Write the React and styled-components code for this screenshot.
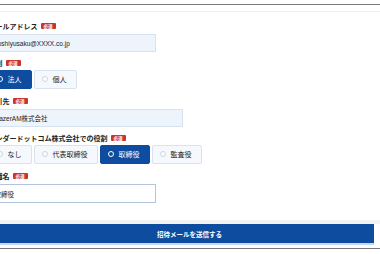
import React from "react";
import styled, { createGlobalStyle } from "styled-components";

const GlobalStyle = createGlobalStyle`
  html, body {
    margin: 0;
    padding: 0;
    background: #fff;
  }
  body {
    font-family: "Noto Sans CJK JP", "Noto Sans", sans-serif;
    overflow: hidden;
  }
`;

const Page = styled.div`
  width: 380px;
  height: 254px;
  overflow: hidden;
  background: #fff;
`;

const Frame = styled.div`
  height: 4px;
  border-bottom: 1px solid #7a7a7a;
`;

const Divider = styled.div`
  height: 6px;
  border-bottom: 1px solid #efefef;
`;

// the form is wider than the window, its left edge is cut off
const Form = styled.div`
  margin-left: -11.5px;
  padding-top: 9px;
  display: flex;
  flex-direction: column;
  gap: 6px;
`;

const Field = styled.div`
  display: flex;
  flex-direction: column;
  gap: ${(p) => (p.$choice ? 1.5 : 3)}px;
  padding-bottom: ${(p) => (p.$choice ? 1.5 : 0)}px;
`;

const Label = styled.div`
  display: flex;
  align-items: center;
  gap: 3px;
  height: 10px;
  font-size: 7px;
  font-weight: 700;
  color: #222;
  white-space: nowrap;
`;

const Badge = styled.span`
  display: inline-flex;
  align-items: center;
  height: 6px;
  padding: 0 3px;
  border-radius: 1px;
  background: #c9342b;
  color: #fff;
  font-size: 4.5px;
  font-weight: 700;
`;

const TextInput = styled.div`
  box-sizing: border-box;
  width: ${(p) => p.$width}px;
  height: ${(p) => (p.$active ? 19 : 18)}px;
  display: flex;
  align-items: center;
  padding: 0 5px;
  border: 1px solid ${(p) => (p.$active ? "#b3c5dc" : "#d6e2ef")};
  background: ${(p) => (p.$active ? "#fff" : "#eef4fb")};
  color: #222;
  font-family: "Liberation Sans", "Noto Sans CJK JP", sans-serif;
  font-size: 6.5px;
  white-space: nowrap;
`;

const RadioGroup = styled.div`
  display: flex;
  gap: 2px;
`;

const RadioOption = styled.div`
  box-sizing: border-box;
  height: 19px;
  display: flex;
  align-items: center;
  gap: 5px;
  padding: 0 9px 0 7px;
  border: 1px solid ${(p) => (p.$checked ? "#0d4c9e" : "#d9e3ef")};
  border-radius: 2px;
  background: ${(p) => (p.$checked ? "#0d4c9e" : "#f5f8fc")};
  color: ${(p) => (p.$checked ? "#fff" : "#222")};
  font-size: 7px;
  white-space: nowrap;
`;

const Dot = styled.span`
  box-sizing: border-box;
  width: 6px;
  height: 6px;
  border-radius: 50%;
  background: ${(p) => (p.$checked ? "#0d4c9e" : "#fff")};
  border: ${(p) => (p.$checked ? "1.5px solid #fff" : "1px solid #ccd5e0")};
`;

const Footer = styled.div`
  margin-top: 17px;
  border-top: 4px solid #f2f3f5;
  padding-bottom: 5px;
  border-bottom: 1.5px solid #7a7a7a;
`;

const SubmitButton = styled.div`
  box-sizing: border-box;
  width: 374px;
  height: 19px;
  padding-left: 5px;
  display: flex;
  align-items: center;
  justify-content: center;
  background: #0d4c9e;
  box-shadow: 0 2px 0 #c9d8ec;
  color: #fff;
  font-size: 6.5px;
  font-weight: 700;
`;

const Radio = ({ options, value }) => (
  <RadioGroup>
    {options.map((o) => (
      <RadioOption key={o} $checked={o === value}>
        <Dot $checked={o === value} />
        {o}
      </RadioOption>
    ))}
  </RadioGroup>
);

const FieldLabel = ({ children }) => (
  <Label>
    {children}
    <Badge>必須</Badge>
  </Label>
);

export default function App() {
  return (
    <Page>
      <GlobalStyle />
      <Frame />
      <Divider />
      <Form>
        <Field>
          <FieldLabel>メールアドレス</FieldLabel>
          <TextInput $width={167.5}>yoshiyusaku@XXXX.co.jp</TextInput>
        </Field>
        <Field $choice>
          <FieldLabel>種別</FieldLabel>
          <Radio options={["法人", "個人"]} value="法人" />
        </Field>
        <Field>
          <FieldLabel>取引先</FieldLabel>
          <TextInput $width={194.5}>RazerAM株式会社</TextInput>
        </Field>
        <Field $choice>
          <FieldLabel>センダードットコム株式会社での役割</FieldLabel>
          <Radio options={["なし", "代表取締役", "取締役", "監査役"]} value="取締役" />
        </Field>
        <Field>
          <FieldLabel>役職名</FieldLabel>
          <TextInput $width={167.5} $active>取締役</TextInput>
        </Field>
      </Form>
      <Footer>
        <SubmitButton>招待メールを送信する</SubmitButton>
      </Footer>
    </Page>
  );
}
